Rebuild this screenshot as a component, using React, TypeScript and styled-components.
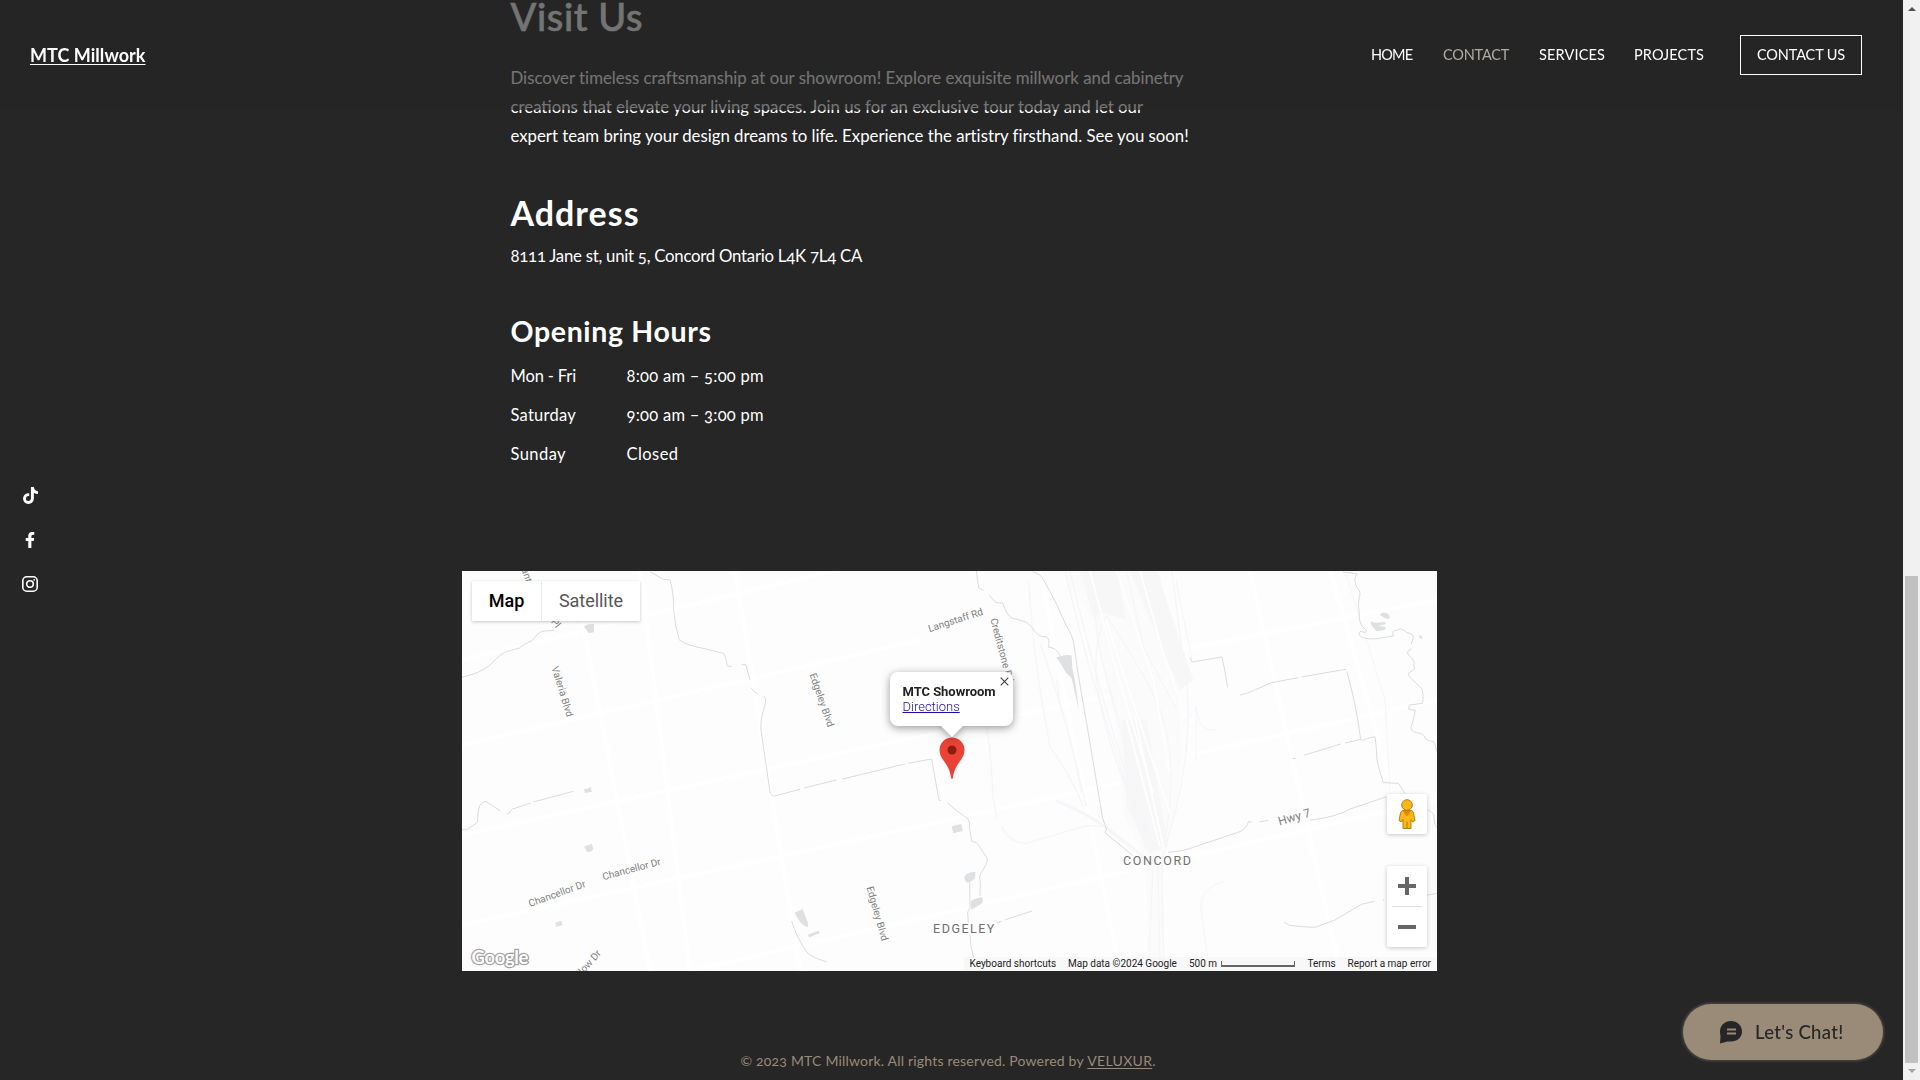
import React from 'react';
import styled, { createGlobalStyle, css } from 'styled-components';
import { FaTiktok, FaFacebookF } from 'react-icons/fa';

const GlobalStyle = createGlobalStyle`
  * { box-sizing: border-box; }
  html, body { margin: 0; padding: 0; background: #262626; overflow: hidden; }
  h1, h2, h3, p, dl, dt, dd { margin: 0; font-weight: inherit; }
`;

const sans = css`font-family: Lato, "Open Sans", sans-serif;`;
const roboto = css`font-family: Roboto, "Liberation Sans", sans-serif;`;

const Page = styled.div`
  ${sans}
  display: flex;
  width: 1920px;
  height: 1080px;
  overflow: hidden;
  color: #fff;
  background: #262626;
  font-feature-settings: "onum";
  white-space: nowrap;
`;
const Viewport = styled.div`
  flex: 1;
  height: 1080px;
  overflow: hidden;
`;

/* header */
const Header = styled.header`
  position: fixed;
  z-index: 3;
  top: 0;
  left: 0;
  width: 1903px;
  height: 110px;
  padding: 0 41px 0 30px;
  display: flex;
  justify-content: space-between;
  align-items: center;
  background: rgba(38, 38, 38, 0.64);
`;
const Logo = styled.a`
  font-size: 18px;
  line-height: 24px;
  font-weight: 700;
  letter-spacing: 0.04px;
  text-decoration: underline;
  text-decoration-thickness: 1px;
  text-underline-offset: 2px;
`;
const Nav = styled.nav`
  display: flex;
  align-items: center;
`;
const NavLink = styled.a<{ $width: number; $tracking: number; $active?: boolean }>`
  width: ${p => p.$width}px;
  font-size: 14.5px;
  line-height: 20px;
  letter-spacing: ${p => p.$tracking}px;
  color: ${p => (p.$active ? '#b1aba3' : '#fff')};
`;
const NavButton = styled.button`
  ${sans}
  width: 122px;
  height: 40px;
  padding: 0 0 2px;
  border: 1px solid #fff;
  background: transparent;
  color: #fff;
  font-size: 14.5px;
  letter-spacing: -0.14px;
`;

/* social rail */
const SocialRail = styled.aside`
  position: fixed;
  z-index: 2;
  left: 22px;
  top: 487px;
  width: 16px;
  display: flex;
  flex-direction: column;
  align-items: center;
  gap: 28px;
  svg { display: block; }
`;

/* content */
const Content = styled.section`
  padding-left: 510.5px;
  display: flex;
  flex-direction: column;
  align-items: flex-start;
`;
const Title = styled.h1`
  margin: -7px 0 24px;
  font-size: 38px;
  line-height: 46px;
  font-weight: 500;
  letter-spacing: 0.6px;
  -webkit-text-stroke: 0.5px currentColor;
`;
const Line = styled.span<{ $tracking: number }>`
  display: block;
  font-size: 16.8px;
  line-height: 29px;
  letter-spacing: ${p => p.$tracking}px;
`;
const AddressTitle = styled.h2`
  margin: 43px 0 8px;
  font-size: 34px;
  line-height: 40px;
  font-weight: 700;
  letter-spacing: 1px;
`;
const HoursTitle = styled.h3`
  margin: 44px 0 9px;
  font-size: 28.5px;
  line-height: 34px;
  font-weight: 700;
  letter-spacing: 0.65px;
`;
const Hours = styled.dl`
  display: grid;
  grid-template-columns: 116px auto;
  grid-auto-rows: 39px;
  font-size: 16.5px;
  line-height: 39px;
`;
const Cell = styled.span<{ $tracking: number }>`
  letter-spacing: ${p => p.$tracking}px;
`;

/* map */
const MapFrame = styled.div`
  ${roboto}
  font-feature-settings: normal;
  position: relative;
  width: 975px;
  height: 400px;
  margin: 97px 0 0 462px;
  overflow: hidden;
  background: #fdfdfe;
  color: #000;
`;
const Canvas = styled.svg`
  display: block;
`;
const TypeSwitch = styled.div`
  position: absolute;
  left: 10px;
  top: 10px;
  height: 40px;
  display: flex;
  background: #fff;
  box-shadow: 0 1px 3px rgba(0, 0, 0, 0.22);
`;
const TypeButton = styled.button<{ $on?: boolean }>`
  ${roboto}
  width: ${p => (p.$on ? 70 : 98)}px;
  padding: 0 0 2px;
  border: 0;
  border-right: ${p => (p.$on ? '1px solid #e9e9e9' : '0')};
  background: #fff;
  font-size: 18px;
  letter-spacing: -0.05px;
  font-weight: ${p => (p.$on ? 500 : 400)};
  color: ${p => (p.$on ? '#000' : '#565656')};
`;
const InfoWindow = styled.div`
  position: absolute;
  left: 428px;
  top: 101px;
  width: 123px;
  height: 54px;
  padding: 12px 0 0 12.5px;
  border-radius: 8px;
  background: #fff;
  filter: drop-shadow(0 2px 4px rgba(0, 0, 0, 0.4));
  font-size: 13px;
  line-height: 15px;
  &::after {
    content: '';
    position: absolute;
    left: 50px;
    top: 53px;
    border: 12px solid transparent;
    border-top-color: #fff;
    border-bottom: 0;
  }
`;
const InfoTitle = styled.div`
  font-weight: 700;
  letter-spacing: -0.04px;
  color: #222;
`;
const InfoLink = styled.a`
  display: block;
  font-weight: 300;
  color: #1a0dab;
  text-decoration: underline;
`;
const CloseIcon = styled.svg`
  position: absolute;
  left: 109.500px;
  top: 5px;
`;
const Pin = styled.svg`
  position: absolute;
  left: 476.5px;
  top: 166px;
`;
const ControlBox = styled.div<{ $top: number; $height: number }>`
  position: absolute;
  left: 925px;
  top: ${p => p.$top}px;
  width: 40px;
  height: ${p => p.$height}px;
  background: #fff;
  border-radius: 2px;
  box-shadow: 0 1px 4px rgba(0, 0, 0, 0.22);
  svg { display: block; }
`;
const Credits = styled.div`
  position: absolute;
  right: 0;
  bottom: 0;
  height: 14px;
  width: 473px;
  padding-left: 5.5px;
  display: flex;
  align-items: center;
  background: rgba(245, 245, 245, 0.75);
  font-size: 10px;
  line-height: 14px;
  color: #222;
`;
const Credit = styled.span<{ $width: number }>`
  flex: none;
  width: ${p => p.$width}px;
`;
const ScaleBar = styled.span`
  flex: none;
  width: 74px;
  height: 6px;
  margin-right: 12.5px;
  border: 2px solid #666;
  border-width: 0 1.5px 2px;
`;

/* footer + chat */
const Footer = styled.footer`
  margin: 80px 0 0 740.5px;
  font-size: 14px;
  line-height: 20px;
  letter-spacing: 0.19px;
  color: #998b78;
  a { text-decoration: underline; text-underline-offset: 2px; letter-spacing: 0.3px; }
`;
const ChatButton = styled.button`
  ${sans}
  position: fixed;
  left: 1683px;
  top: 1004px;
  width: 200px;
  height: 56px;
  padding: 0 0 0 36px;
  display: flex;
  align-items: center;
  gap: 12px;
  border: 0;
  border-radius: 28px;
  background: #998b78;
  color: #262626;
  font-size: 18.5px;
  font-weight: 500;
  letter-spacing: 0.3px;
  box-shadow: 0 0 3px 1px rgba(153, 139, 120, 0.4);
`;

/* scrollbar */
const Scrollbar = styled.div`
  width: 17px;
  height: 1080px;
  padding: 7px 0;
  display: flex;
  flex-direction: column;
  align-items: center;
  background: #f1f1f1;
`;
const Arrow = styled.span<{ $down?: boolean }>`
  border: 4px solid transparent;
  ${p => p.$down
    ? css`border-bottom: 0; border-top-color: #a3a3a3; margin-top: 6px;`
    : css`border-top: 0; border-bottom-color: #505050; margin-bottom: 565px;`}
`;
const Thumb = styled.span`
  width: 13px;
  height: 487px;
  background: #c1c1c1;
`;

const places: [string, number, number, number, number?][] = [
  ['Valeria Blvd', 562.5, 691.5, 73],
  ['Edgeley Blvd', 822, 700, 71],
  ['Edgeley Blvd', 877.5, 913.5, 74],
  ['Chancellor Dr', 557, 893.5, -20],
  ['Chancellor Dr', 631.5, 869, -15],
  ['Willow Dr', 585, 967, -48],
  ['ant', 527, 575, 72],
  ['Pl', 556, 623, 50],
  ['Langstaff Rd', 955.5, 620, -18],
  ['Creditstone Rd', 1002, 650, 75],
  ['Hwy 7', 1294.5, 817.5, -16, 12],
];

const waterWest = [
  'M36 352Q90 340 120 315Q150 282 172 274L208 264Q216 256 246 242Q262 220 275 214L312 211',
  'M600 35L640 58L660 60Q672 100 671 150Q675 200 688 240Q710 256 755 264L820 280Q828 288 832 318L845 320',
  'M875 314L888 314L892 330M892 330L900 360M904 384L912 394L924 402',
  'M942 408Q950 415 944 440Q930 480 933 510L960 695Q963 708 975 708L1050 688M1062 684L1160 660M1178 657L1365 612M1374 610L1445 597L1467 720L1474 722',
  'M36 809L50 809L82 788Q84 735 94 732Q105 720 112 727L150 752M170 763L176 761Q186 744 192 746L242 729M250 726L370 694',
  'M1025 1083Q1040 1135 1075 1182Q1098 1197 1130 1206',
];
const waterMid = [
  'M349 33L356 83L371 92M388 106L408 128L428 129Q440 165 455 174L492 184Q510 190 525 215Q540 232 558 230Q570 235 566 262Q590 262 602 290',
  'M517 36Q540 40 550 58L565 85L590 133L618 195Q640 230 642 255L655 345L680 490L728 775L740 808L735 818L820 888',
  'M262 728Q285 750 322 775Q333 788 328 800L335 843L352 850L383 897Q380 915 368 932Q355 945 361 970L360 1008M329 962L330 1045L323 1056L325 1088M330 1125Q330 1160 342 1195',
  'M410 1089L424 1084M434 1080L516 1053',
];
const waterEast = [
  'M180 293L186 306L276 291L284 330L293 382',
  'M330 405Q350 402 370 392L425 368L505 353M515 351L600 336L648 328M651 335Q680 440 692 538L645 549M633 552L522 586M488 596L497 595',
  'M692 538Q700 545 710 536L735 530Q740 560 741 600Q750 640 760 668L805 670L825 700',
  'M638 36Q670 40 682 42Q668 55 680 80Q695 100 688 110Q682 130 688 160Q686 190 700 202Q716 215 704 218Q684 208 688 225Q700 240 740 236L790 228Q785 210 800 211Q815 200 830 218Q850 220 850 232L844 252',
  'M845 266Q825 275 838 288Q860 305 850 316Q860 325 843 335Q828 340 842 354L875 385Q882 400 878 430L838 435L836 447L856 452Q852 475 844 500Q840 515 860 518Q885 520 887 538Q905 545 912 545L921 575',
  'M115 877Q165 873 190 862L330 815Q350 805 356 784L366 787M388 786L415 781M540 780Q560 779 600 770Q640 760 655 749L770 710',
  'M462 1087Q475 1098 495 1098Q530 1102 555 1102Q580 1093 615 1080L695 1033L733 1024M758 1020L762 1019M890 1006L921 1000',
  'M893 750Q910 755 912 770Q912 795 921 803',
];

const MapCanvas = () => (
  <Canvas width="975" height="400" viewBox="462 571 975 400">
    {/* faint street gaps */}
    <g stroke="#fff" strokeWidth="4" fill="none">
      <path d="M640 571L690 971M735 571L800 971M580 610L650 971M462 660L940 545M462 745L920 640M462 835L1180 680M462 925L1180 770M690 971L1437 800M1040 571L1120 971M1250 571L1340 971M1180 650L1437 600M1190 755L1437 700M1330 571L1405 830" />
    </g>
    {/* rail yard */}
    <g transform="translate(860 560) scale(.3333)">
      <path d="M610 33H790L900 33L950 300L965 600L950 750L910 890L908 1233H862L858 900L790 760L770 500L700 180Z" fill="#fbfbfc" />
      <path d="M660 33L770 33L800 180L735 160L700 170ZM785 480L860 480L925 860L868 880L800 740ZM810 33L890 33L1000 360L960 390Z" fill="#f7f7f8" />
      <g fill="none" stroke="#f5f6f8" strokeWidth="4">
        <path d="M615 33Q650 180 690 330L860 870M630 33Q680 250 760 520L870 870M700 33Q700 180 725 300L880 870M738 170Q700 240 710 360Q740 600 885 860M740 170Q850 330 900 450Q960 600 910 870M800 33L850 260L950 450M890 33L960 300M935 33L965 260Q1010 480 950 740L905 900M880 890L866 1233M893 890L900 1233M905 890L912 1233M505 60Q520 270 545 420L570 560Q640 660 670 740M540 250Q560 300 620 500L680 740M590 360L600 430Q640 560 665 700M380 500Q395 600 398 700L410 780M425 800Q450 850 500 850Q600 820 680 797L735 800" />
        <path d="M588 722Q680 760 735 800L850 890" strokeWidth="9" />
      </g>
      <g fill="none" stroke="#fff" strokeWidth="5">
        <path d="M690 33L760 300L880 700M770 33L880 360L930 640M840 33L910 280L980 480M800 480L900 860M825 470L912 870M738 180L830 460L930 760" />
      </g>
    </g>
    <g fill="none" stroke="#f5f6f8" strokeWidth="1">
      <path d="M1176 580L1192 660M1196 705L1196 760M1183 723L1196 708L1200 722Q1204 731 1216 730M1225 881Q1200 887 1201 910L1208 960M1345 571L1385 700L1390 790" />
    </g>
    {/* streams */}
    <g fill="none" stroke="#dadbde" strokeWidth="3" strokeLinejoin="round">
      <g transform="translate(450 560) scale(.3333)">{waterWest.map(d => <path key={d} d={d} />)}</g>
      <g transform="translate(860 560) scale(.3333)">{waterMid.map(d => <path key={d} d={d} />)}</g>
      <g transform="translate(1130 560) scale(.3333)">{waterEast.map(d => <path key={d} d={d} />)}</g>
    </g>
    {/* ponds */}
    <g fill="#dfe0e2">
      <g transform="translate(450 560) scale(.3333)">
        <path d="M402 200L415 193L432 192V217L416 219ZM402 687L412 686L422 681L426 695L405 699ZM402 860L425 851L430 866Q425 877 412 876ZM316 1088L334 1082L338 1096L318 1100ZM1034 1058L1058 1047L1074 1088V1102Q1050 1095 1034 1058ZM1073 1124L1105 1112L1111 1119L1078 1132Z" />
      </g>
      <g transform="translate(860 560) scale(.3333)">
        <path d="M275 799L304 792L308 813L280 820ZM312 950Q322 935 346 936L345 955Q330 970 318 967ZM332 1023Q355 1012 367 1012Q372 1030 358 1035L334 1049ZM589 292L615 286Q630 283 635 287L637 325Q650 380 656 448L635 355L617 337L603 312Z" />
      </g>
      <g transform="translate(1130 560) scale(.3333)">
        <path d="M750 165Q762 150 778 166L779 177L765 175ZM722 184L736 188L766 186L767 193L745 197L767 201L764 210L740 214L724 196ZM867 225L876 228L878 237L869 235Z" />
      </g>
    </g>
    {/* labels */}
    <g fill="#808080" fontSize="10" textAnchor="middle">
      {places.map(([name, x, y, angle, size], i) => (
        <text key={i} fontSize={size ?? 10} transform={`translate(${x} ${y}) rotate(${angle})`} dy="3.5" stroke="#fff" strokeWidth="2" paintOrder="stroke">{name}</text>
      ))}
      <text x="964.5" y="933" fontSize="12.500" letterSpacing="1.5" fill="#707070">EDGELEY</text>
      <text x="1157.8" y="865" fontSize="12.500" letterSpacing="1.62" fill="#707070">CONCORD</text>
    </g>
    <text x="471.5" y="963.5" fontFamily="Lato, sans-serif" fontWeight="700" fontSize="18.5" textLength="57" fill="#fff" stroke="#a0a0a0" strokeWidth="2.400" paintOrder="stroke">Google</text>
  </Canvas>
);

const Pegman = () => (
  <svg width="40" height="40" viewBox="0 0 40 40">
    <g fill="#fbb917" stroke="#b06f10" strokeWidth=".9">
      <path d="M15.5 16.5H24.5Q26 17 26.500 19L28 26.500L25.500 28L24 25.500V34.500H16V25.500L14.500 28L12 26.500L13.500 19Q14 17 15.500 16.500Z" />
      <path d="M20 27.500V34.500" />
      <circle cx="20" cy="11" r="5.300" />
    </g>
    <path d="M15.500 16.800H24.500L20 22.500Z" fill="#e8860c" />
  </svg>
);

export default function App() {
  return (
    <Page>
      <GlobalStyle />
      <Viewport>
        <Header>
          <Logo>MTC Millwork</Logo>
          <Nav>
            <NavLink $width={72} $tracking={-0.8}>HOME</NavLink>
            <NavLink $width={96} $tracking={-0.2} $active>CONTACT</NavLink>
            <NavLink $width={95} $tracking={0.14}>SERVICES</NavLink>
            <NavLink $width={106} $tracking={0.11}>PROJECTS</NavLink>
            <NavButton>CONTACT US</NavButton>
          </Nav>
        </Header>
        <SocialRail>
          <FaTiktok size={17} />
          <FaFacebookF size={16} />
          <svg width="16" height="16" viewBox="0 0 16 16" fill="none" stroke="#fff" strokeWidth="1.6">
            <rect x=".8" y=".8" width="14.4" height="14.4" rx="4" />
            <circle cx="8" cy="8" r="3.3" />
            <circle cx="12.200" cy="3.800" r=".9" fill="#fff" stroke="none" />
          </svg>
        </SocialRail>
        <Content>
          <Title>Visit Us</Title>
          <p>
            <Line $tracking={0.02}>Discover timeless craftsmanship at our showroom! Explore exquisite millwork and cabinetry</Line>
            <Line $tracking={0}>creations that elevate your living spaces. Join us for an exclusive tour today and let our</Line>
            <Line $tracking={-0.01}>expert team bring your design dreams to life. Experience the artistry firsthand. See you soon!</Line>
          </p>
          <AddressTitle>Address</AddressTitle>
          <Line $tracking={-0.25}>8111 Jane st, unit 5, Concord Ontario L4K 7L4 CA</Line>
          <HoursTitle>Opening Hours</HoursTitle>
          <Hours>
            <Cell $tracking={-0.14}>Mon - Fri</Cell><Cell $tracking={0.27}>8:00 am – 5:00 pm</Cell>
            <Cell $tracking={0.25}>Saturday</Cell><Cell $tracking={0.27}>9:00 am – 3:00 pm</Cell>
            <Cell $tracking={0.43}>Sunday</Cell><Cell $tracking={0.44}>Closed</Cell>
          </Hours>
        </Content>
        <MapFrame>
          <MapCanvas />
          <TypeSwitch>
            <TypeButton $on>Map</TypeButton>
            <TypeButton>Satellite</TypeButton>
          </TypeSwitch>
          <Pin width="26" height="43" viewBox="0 0 26 43">
            <path d="M13 .5C6 .5.5 6 .5 13c0 4 1.500 7 4 10.500C8.500 29 11 33 12 40.500Q12.500 42 13 42T14 40.500C15 33 17.500 29 21.500 23.500 24 20 25.500 17 25.500 13 25.500 6 20 .5 13 .5Z" fill="#ea4335" />
            <circle cx="13" cy="13" r="4.500" fill="#8b1a12" />
          </Pin>
          <InfoWindow>
            <InfoTitle>MTC Showroom</InfoTitle>
            <InfoLink>Directions</InfoLink>
            <CloseIcon width="9" height="9" viewBox="0 0 9 9" stroke="#444" strokeWidth="1.200">
              <path d="M.7.7L8.300 8.300M8.300.7L.7 8.300" />
            </CloseIcon>
          </InfoWindow>
          <ControlBox $top={223} $height={40}><Pegman /></ControlBox>
          <ControlBox $top={295} $height={81}>
            <svg width="40" height="81" viewBox="0 0 40 81">
              <path d="M11 20H29M20 11V29M11 61H29" stroke="#666" strokeWidth="4" />
              <path d="M5 40.500H35" stroke="#e0e0e0" />
            </svg>
          </ControlBox>
          <Credits>
            <Credit $width={98.5}>Keyboard shortcuts</Credit>
            <Credit $width={121}>Map data ©2024 Google</Credit>
            <Credit $width={32}>500 m</Credit>
            <ScaleBar />
            <Credit $width={40}>Terms</Credit>
            <Credit $width={84}>Report a map error</Credit>
          </Credits>
        </MapFrame>
        <Footer>© 2023 MTC Millwork. All rights reserved. Powered by <a>VELUXUR</a>.</Footer>
        <ChatButton>
          <svg width="24" height="24" viewBox="0 0 24 24">
            <path d="M12 1C18.200 1 23 5.500 23 11.500S18.200 21.500 12 21.500H8.500L1 23.500L1.500 16Q1 14 1 11.500C1 5.500 5.800 1 12 1Z" fill="#262626" />
            <path d="M8 9.500H17M8 13.500H17" stroke="#998b78" strokeWidth="1.800" />
          </svg>
          Let's Chat!
        </ChatButton>
      </Viewport>
      <Scrollbar>
        <Arrow />
        <Thumb />
        <Arrow $down />
      </Scrollbar>
    </Page>
  );
}
